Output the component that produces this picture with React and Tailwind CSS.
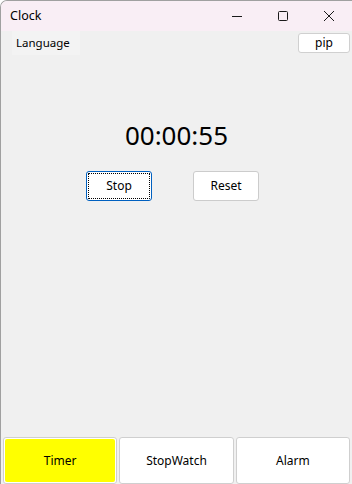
import React, { useState } from 'react';

const font = { fontFamily: '"Noto Sans", "Open Sans", Arial, sans-serif' };

function TitleBar() {
  return (
    <div className="h-[30px] flex items-center bg-[#f9eef5] shrink-0">
      <span className="ml-[9px] text-[12.5px] text-black">Clock</span>
      <div className="ml-auto flex items-center h-full">
        {/* minimise */}
        <div className="w-[46px] h-full flex items-center justify-center">
          <svg width="12" height="12" viewBox="0 0 12 12">
            <path d="M1 6.5h10" stroke="#1a1a1a" strokeWidth="1" />
          </svg>
        </div>
        {/* maximise */}
        <div className="w-[46px] h-full flex items-center justify-center">
          <svg width="12" height="12" viewBox="0 0 12 12">
            <rect x="1.5" y="1.5" width="9" height="9" rx="1" fill="none" stroke="#1a1a1a" strokeWidth="1" />
          </svg>
        </div>
        {/* close */}
        <div className="w-[46px] h-full flex items-center justify-center">
          <svg width="12" height="12" viewBox="0 0 12 12">
            <path d="M1 1l10 10M11 1L1 11" stroke="#1a1a1a" strokeWidth="1" />
          </svg>
        </div>
      </div>
    </div>
  );
}

export default function App() {
  const [tab, setTab] = useState('Timer');

  return (
    <div style={font} className="w-[352px] h-[484px] flex flex-col bg-[#f0f0f0] border-l border-t border-[#a0a0a0] rounded-tl-[7px] overflow-hidden">
      <TitleBar />

      {/* top row: language + pip */}
      <div className="h-[24px] flex items-start">
        <div className="ml-[11px] w-[68px] h-[24px] bg-[#f3f3f3] flex items-center">
          <span className="ml-[4px] text-[11.5px] text-black">Language</span>
        </div>
        <button className="ml-auto mr-[2px] mt-[2px] w-[52px] h-[20px] bg-white border border-[#d0d0d0] rounded-[3px] text-[12px] text-black leading-none">
          pip
        </button>
      </div>

      {/* clock */}
      <div className="mt-[64px] flex justify-center">
        <span className="text-[26px] leading-[32px] text-black">00:00:55</span>
      </div>

      <div className="mt-[20px] flex">
        <button className="ml-[85px] w-[66px] h-[30px] bg-white border border-[#0060c0] rounded-[3px] outline-1 outline-dotted outline-black outline-offset-[-3px] text-[12px] text-black">
          Stop
        </button>
        <button className="ml-[41px] w-[66px] h-[30px] bg-white border border-[#cccccc] rounded-[3px] text-[12px] text-black">
          Reset
        </button>
      </div>

      <div className="flex-1" />

      {/* tabs */}
      <div className="h-[47px] flex gap-[2px] pl-[2px] pr-[2px]">
        {['Timer', 'StopWatch', 'Alarm'].map((t) => (
          <button
            key={t}
            onClick={() => setTab(t)}
            className="flex-1 h-full rounded-[3px] border border-[#cfcfcf] p-[1px] bg-white text-[12px] text-black"
          >
            <div className={`w-full h-full flex items-center justify-center rounded-[2px] ${tab === t ? 'bg-[#ffff00]' : 'bg-white'}`}>
              {t}
            </div>
          </button>
        ))}
      </div>
    </div>
  );
}
